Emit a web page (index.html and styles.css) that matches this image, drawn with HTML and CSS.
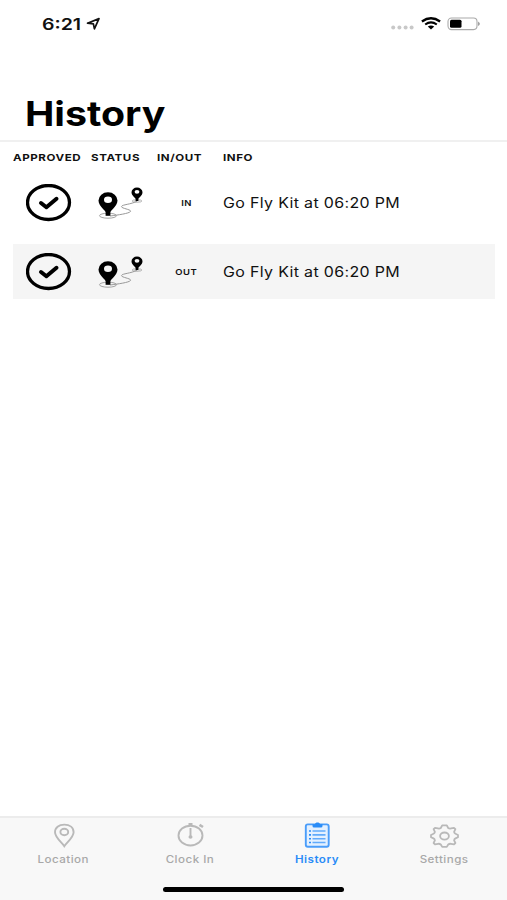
FILE: index.html
```html
<!DOCTYPE html>
<html lang="en">

<head>
    <meta charset="UTF-8">
    <meta name="viewport" content="width=device-width, initial-scale=1.0">
    <title>History</title>
    <link rel="stylesheet" href="styles.css">
</head>

<body>
    <!-- shared icons -->
    <svg class="defs" width="0" height="0">
        <symbol id="check" viewBox="0 0 46 38">
            <ellipse cx="22.500" cy="18.500" rx="21" ry="17" fill="none" stroke="#000" stroke-width="3.300" />
            <path d="M15 19L20.400 23.300L30.500 14.800" fill="none" stroke="#000" stroke-width="4" stroke-linecap="round" stroke-linejoin="round" />
        </symbol>
        <symbol id="route" viewBox="0 0 46 32">
            <ellipse cx="10" cy="28.700" rx="8.500" ry="2.500" fill="none" stroke="#999" stroke-width="0.900" />
            <ellipse cx="39" cy="14" rx="4.800" ry="1.200" fill="none" stroke="#999" stroke-width="0.800" />
            <path d="M12 29C20 28 31 26.500 32.500 24.500C34 22.500 23 21.500 23.500 19.500C24 17.500 33 17.500 39 14.200" fill="none" stroke="#999" stroke-width="1" />
            <path fill-rule="evenodd" d="M10 28.800C9.500 24.500 0.500 20 0.500 13.600A9.500 8.300 0 0 1 19.500 13.600C19.500 20 10.500 24.500 10 28.800ZM10 9.500A4 3.300 0 1 0 10 16.100A4 3.300 0 1 0 10 9.500Z" />
            <path d="M7.600 23H12.400V28.800H7.600Z" />
            <path fill-rule="evenodd" d="M39 13.800C38.700 11.300 33.500 9.300 33.500 5.200A5.500 4.600 0 0 1 44.500 5.200C44.500 9.300 39.300 11.300 39 13.800ZM39 2.900A2.400 1.900 0 1 0 39 6.700A2.400 1.900 0 1 0 39 2.900Z" />
            <path d="M37.600 10H40.400V14H37.600Z" />
        </symbol>
    </svg>

    <div class="status_bar">
        <div class="clock">
            <span class="wide">6:21</span>
            <svg width="15" height="14" viewBox="0 0 15 14">
                <path d="M1.500 6.200L13 1.600L8.400 11.800L7.400 6.800Z" fill="none" stroke="#111" stroke-width="1.700" stroke-linejoin="round" />
            </svg>
        </div>
        <div class="indicators">
            <svg width="23" height="5" viewBox="0 0 23 5" fill="#c8c8c8">
                <circle cx="2.200" cy="2.500" r="2" />
                <circle cx="8.400" cy="2.500" r="2" />
                <circle cx="14.600" cy="2.500" r="2" />
                <circle cx="20.600" cy="2.500" r="2" />
            </svg>
            <svg class="wifi" width="20" height="13" viewBox="0 0 20 13" fill="none" stroke="#000">
                <path d="M0.900 4.500Q10 -2 19.100 4.500" stroke-width="2.300" />
                <path d="M4.200 7.500Q10 3.200 15.800 7.500" stroke-width="2.100" />
                <path d="M6.800 9.600Q10 7.300 13.200 9.600L10 12.600Z" fill="#000" stroke="none" />
            </svg>
            <svg class="battery" width="34" height="14" viewBox="0 0 34 14">
                <rect x="1" y="1" width="29" height="11.600" rx="3.500" fill="none" stroke="#aaa" stroke-width="1.100" />
                <rect x="3" y="2.800" width="11.500" height="8" rx="1.500" />
                <path d="M31.300 4.500Q34 6.800 31.300 9Z" fill="#777" />
            </svg>
        </div>
    </div>

    <div class="header">
        <h1 class="wide">History</h1>
    </div>

    <div class="history">
        <div class="row head">
            <div><span class="wide">APPROVED</span></div>
            <div><span class="wide">STATUS</span></div>
            <div><span class="wide">IN/OUT</span></div>
            <div><span class="wide">INFO</span></div>
        </div>
        <div class="row">
            <div class="approved"><svg width="46" height="38"><use href="#check" /></svg></div>
            <div class="route"><svg width="46" height="32"><use href="#route" /></svg></div>
            <div class="in_out"><span class="wide">IN</span></div>
            <div class="info"><span class="wide">Go Fly Kit at 06:20 PM</span></div>
        </div>
        <div class="row shaded">
            <div class="approved"><svg width="46" height="38"><use href="#check" /></svg></div>
            <div class="route"><svg width="46" height="32"><use href="#route" /></svg></div>
            <div class="in_out"><span class="wide">OUT</span></div>
            <div class="info"><span class="wide">Go Fly Kit at 06:20 PM</span></div>
        </div>
    </div>

    <div class="tab_bar">
        <div class="tabs">
            <div class="tab">
                <svg width="30" height="28" viewBox="0 0 30 28" fill="none" stroke="currentColor" stroke-width="1.900">
                    <path d="M16.300 25.200C13.800 21.500 7 16.500 7 11.300C7 6.500 10.800 3.600 16.300 3.600S25.600 6.500 25.600 11.300C25.600 16.500 18.800 21.500 16.300 25.200Z" />
                    <ellipse cx="16.300" cy="11" rx="3.900" ry="3.200" />
                </svg>
                <span class="wide">Location</span>
            </div>
            <div class="tab">
                <svg width="30" height="28" viewBox="0 0 30 28" fill="none" stroke="currentColor" stroke-width="1.900">
                    <ellipse cx="15.500" cy="14.600" rx="12" ry="9.900" />
                    <path d="M15.500 7V15M15.500 5V2M13.500 3H17.500" />
                    <path d="M24.500 3.800L28 6" stroke-width="2.600" />
                    <ellipse cx="15.500" cy="16" rx="2" ry="1.700" fill="currentColor" stroke="none" />
                </svg>
                <span class="wide">Clock In</span>
            </div>
            <div class="tab active">
                <svg width="30" height="28" viewBox="0 0 30 28" fill="none" stroke="currentColor" stroke-width="1.900">
                    <rect x="3.800" y="3.400" width="22.900" height="22.300" rx="2" fill="#e3f0ff" stroke="#4a9dfa" />
                    <path d="M10.500 10H23.500M10.500 13.900H23.500M10.500 17.800H23.500M10.500 21.500H23.500" stroke="#61aafb" stroke-width="1.600" />
                    <path d="M7 10H9M7 13.900H9M7 17.800H9M7 21.500H9" stroke-width="1.600" />
                    <path d="M10.500 3.200H13C13 1 18 1 18 3.200H20.500V5Q20.500 6.500 19 6.500H12Q10.500 6.500 10.500 5Z" fill="currentColor" stroke="none" />
                </svg>
                <span class="wide">History</span>
            </div>
            <div class="tab">
                <svg width="30" height="28" viewBox="0 0 30 28" fill="none" stroke="currentColor" stroke-width="1.800" stroke-linejoin="round">
                    <path d="M13.200 4.300L11.800 7Q10.500 7.800 9 7.400L6 6.800L4.600 8.200L5.900 10.800Q5.700 12.200 4.500 12.800L2 14V16.200L4.500 17.400Q5.700 18 5.900 19.400L4.600 22L6 23.400L9 22.800Q10.500 22.500 11.800 23.500L13.200 25.900H17.800L19.200 23.500Q20.500 22.500 22 22.800L25 23.400L26.400 22L25.100 19.400Q25.300 18 26.500 17.400L29 16.200V14L26.500 12.800Q25.300 12.200 25.100 10.800L26.400 8.200L25 6.800L22 7.400Q20.500 7.800 19.200 7L17.800 4.300Z" />
                    <ellipse cx="15.500" cy="15.100" rx="4.400" ry="3.600" />
                </svg>
                <span class="wide">Settings</span>
            </div>
        </div>
        <div class="home_indicator"></div>
    </div>
</body>

</html>
```
FILE: styles.css
```css
* {
    box-sizing: border-box;
}

body {
    font-family: Inter, sans-serif;
    margin: 0;
    height: 900px;
    display: flex;
    flex-direction: column;
    background-color: #fff;
    color: #111;
    overflow: hidden;
}

svg {
    display: block;
    flex: none;
}

.defs {
    display: none;
}

/* extended letterforms */
.wide {
    display: inline-block;
    transform: scaleX(1.18);
    transform-origin: left center;
    white-space: nowrap;
}

.status_bar {
    height: 47px;
    display: flex;
    justify-content: space-between;
    align-items: center;
    padding: 0 26px 0 42px;
}

.clock {
    display: flex;
    align-items: center;
    font-size: 16px;
    font-weight: 600;
}

.clock .wide {
    width: 44px;
    transform: scaleX(1.22);
}

.indicators {
    display: flex;
    align-items: center;
}

.indicators svg:first-child {
    margin-top: 8px;
}

.wifi {
    margin-left: 7px;
}

.battery {
    margin-left: 6px;
}

.header {
    height: 95px;
    border-bottom: 2px solid #f0f0f0;
    padding: 46px 25px 0;
}

.header h1 {
    margin: 0;
    font-size: 34px;
    line-height: 41px;
    font-weight: 700;
    color: #000;
    transform: scaleX(1.155);
}

.history {
    flex: 1;
    padding: 0 12px 0 13px;
}

.row {
    display: grid;
    grid-template-columns: 78px 66px 66px 1fr;
    align-items: center;
    height: 55px;
    margin-bottom: 14px;
}

.row.head {
    height: 31px;
    margin-bottom: 2px;
    font-size: 9.5px;
    font-weight: 700;
    letter-spacing: 0.45px;
}

.row.head .wide {
    transform: scaleX(1.22);
}

.row.shaded {
    background-color: #f5f5f5;
}

.approved {
    padding-left: 13px;
}

.route {
    padding-left: 7px;
}

.in_out {
    font-size: 8px;
    font-weight: 600;
    letter-spacing: 0.4px;
    text-align: center;
    padding-right: 7px;
}

.in_out .wide,
.tab .wide {
    transform-origin: center;
}

.info {
    font-size: 14px;
    letter-spacing: 0.3px;
}

.info .wide {
    transform: scaleX(1.14);
}

.tab_bar {
    height: 84px;
    border-top: 2px solid #ececec;
    background-color: #f8f8f8;
    display: flex;
    flex-direction: column;
    align-items: center;
}

.tabs {
    display: flex;
    width: 100%;
    height: 69px;
    padding-top: 3px;
}

.tab {
    flex: 1;
    display: flex;
    flex-direction: column;
    align-items: center;
    font-size: 10px;
    line-height: 14px;
    font-weight: 500;
    letter-spacing: 0.4px;
    color: #a8a8a8;
}

.tab svg {
    color: #b9b9b9;
}

.tab span {
    margin-top: 3px;
}

.tab .wide {
    transform: scaleX(1.16);
}

.tab.active,
.tab.active svg {
    color: #2a8cf7;
}

.tab.active {
    font-weight: 600;
}

.home_indicator {
    width: 181px;
    height: 5px;
    border-radius: 3px;
    background-color: #000;
}
```
